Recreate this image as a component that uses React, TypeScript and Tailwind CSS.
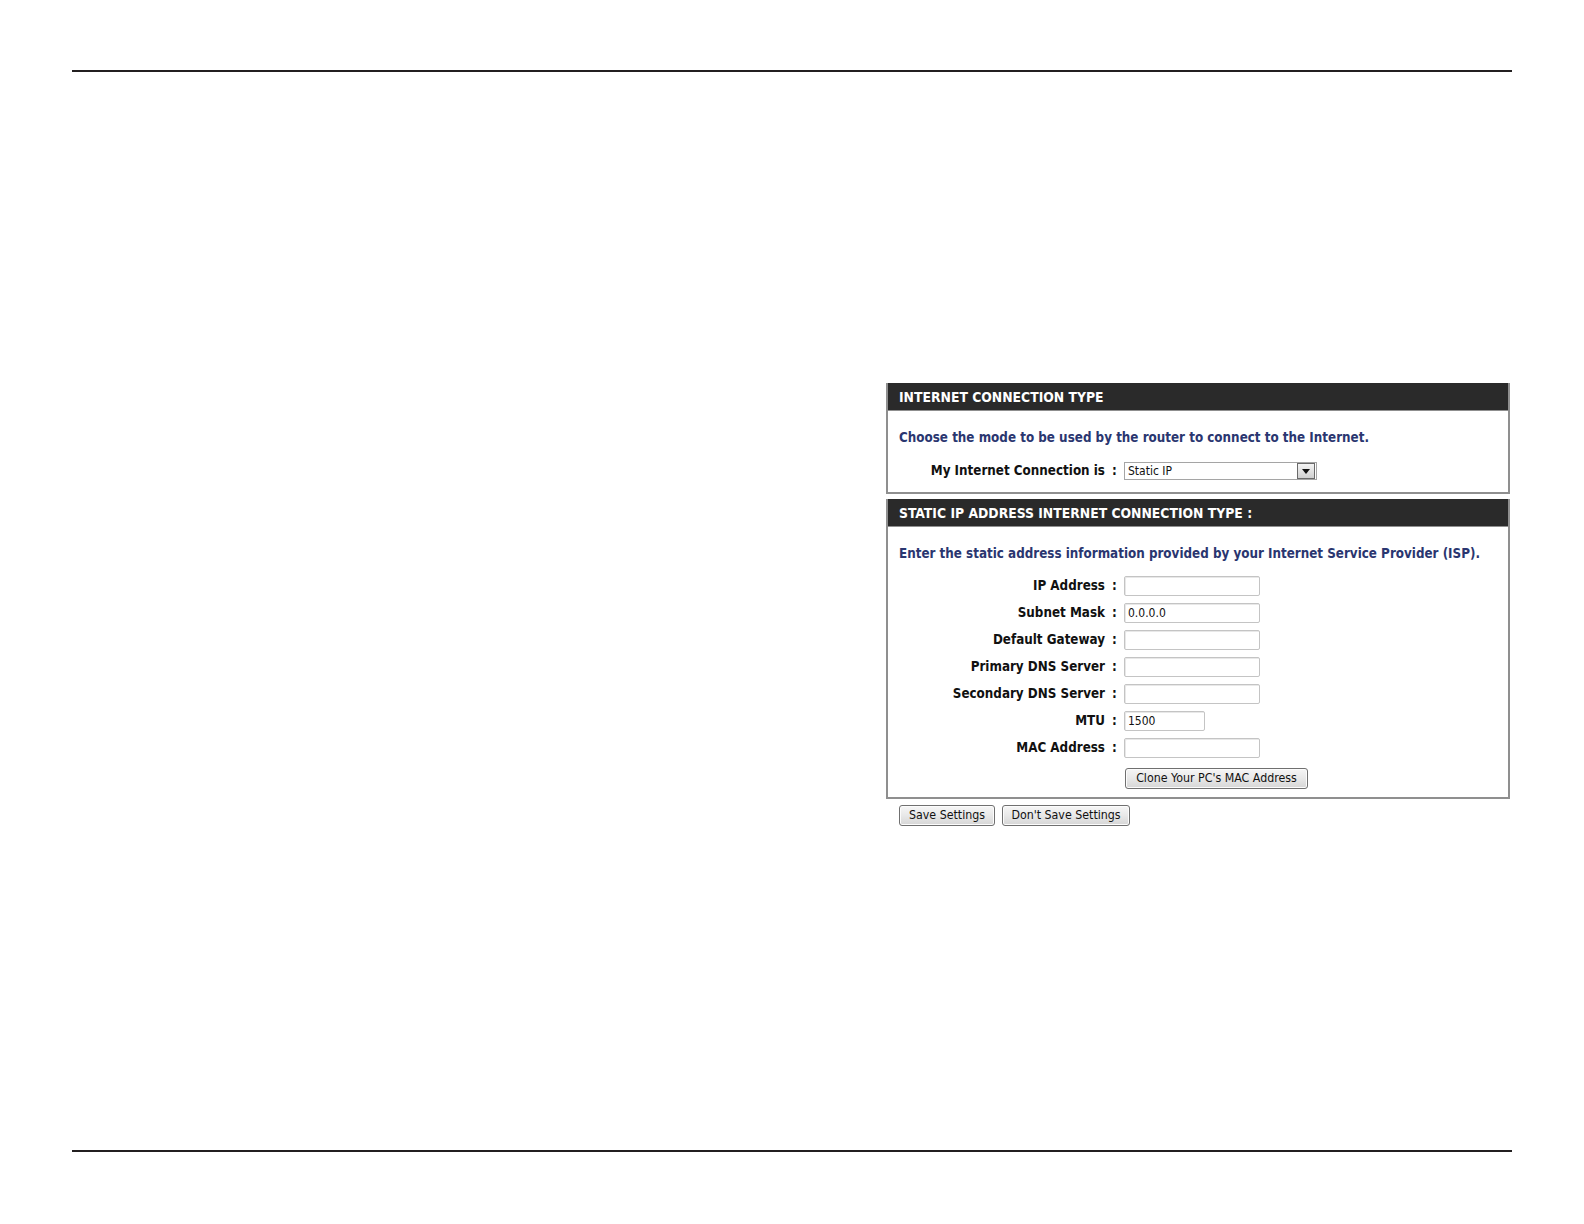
import React from "react";

const font = { fontFamily: '"DejaVu Sans Condensed", "DejaVu Sans", sans-serif' };

const rows = [
  { label: "IP Address", value: "", w: "w-[136px]" },
  { label: "Subnet Mask", value: "0.0.0.0", w: "w-[136px]" },
  { label: "Default Gateway", value: "", w: "w-[136px]" },
  { label: "Primary DNS Server", value: "", w: "w-[136px]" },
  { label: "Secondary DNS Server", value: "", w: "w-[136px]" },
  { label: "MTU", value: "1500", w: "w-[81px]" },
  { label: "MAC Address", value: "", w: "w-[136px]" },
];

function TextBox({ value, w }: { value: string; w: string }) {
  return (
    <div
      className={`${w} h-[20px] border border-[#c4c4c4] rounded-[2px] bg-white flex items-center pl-[3px] text-[12px] text-[#111] shadow-[inset_1px_1px_0_#e8e8e8]`}
    >
      {value}
    </div>
  );
}

function Btn({ children, w }: { children: React.ReactNode; w: string }) {
  return (
    <div
      className={`${w} h-[21px] border border-[#707070] rounded-[3px] bg-gradient-to-b from-[#f6f6f6] via-[#e8e8e8] to-[#d6d6d6] flex items-center justify-center text-[12.3px] text-[#111] shadow-[inset_0_0_0_1px_#fcfcfc]`}
    >
      {children}
    </div>
  );
}

function Header({ children }: { children: React.ReactNode }) {
  return (
    <div className="h-[28px] bg-[#2a2a2a] text-white font-bold text-[13.8px] pl-[11px] pt-[2px] flex items-center border-b border-[#8f8f8f]">
      {children}
    </div>
  );
}

function Label({ children }: { children: React.ReactNode }) {
  return (
    <>
      <div className="w-[217px] text-right font-bold text-[13.3px] text-[#111] whitespace-nowrap">{children}</div>
      <div className="w-[19px] text-center font-bold text-[13.3px] text-[#111]">:</div>
    </>
  );
}

export default function App() {
  return (
    <div className="w-[1584px] h-[1224px] bg-white flex flex-col px-[72px] pt-[70px] pb-[72px]" style={font}>
      <div className="h-[2px] bg-[#231f20]" />

      <div className="ml-[814px] w-[624px] mt-[311px]">
        {/* internet connection type */}
        <div className="border-2 border-t-0 border-[#8f8f8f]">
          <Header>INTERNET CONNECTION TYPE</Header>
          <div className="pt-[17px] pb-[11px]">
            <div className="pl-[11px] h-[20px] leading-[20px] font-bold text-[13.3px] text-[#2a3670] whitespace-nowrap">
              Choose the mode to be used by the router to connect to the Internet.
            </div>
            <div className="flex items-center h-[20px] mt-[13px]">
              <Label>My Internet Connection is</Label>
              <div className="w-[193px] h-[18px] border border-[#a5a5a5] bg-white flex items-center text-[12px] text-[#111]">
                <span className="flex-1 pl-[3px]">Static IP</span>
                <div className="w-[18px] h-[16px] border border-[#6a6a6a] bg-gradient-to-b from-[#f4f4f4] to-[#d0d0d0] flex items-center justify-center mr-px">
                  <svg width="8" height="5" viewBox="0 0 8 5">
                    <path d="M0 0 H8 L4 5 Z" fill="#111" />
                  </svg>
                </div>
              </div>
            </div>
          </div>
        </div>

        {/* static ip */}
        <div className="border-2 border-t-0 border-[#8f8f8f] mt-[5px]">
          <Header>STATIC IP ADDRESS INTERNET CONNECTION TYPE :</Header>
          <div className="pt-[17px] pb-[8px]">
            <div className="pl-[11px] h-[20px] leading-[20px] font-bold text-[13.3px] text-[#2a3670] whitespace-nowrap">
              Enter the static address information provided by your Internet Service Provider (ISP).
            </div>
            <div className="flex flex-col gap-[7px] mt-[12px]">
              {rows.map((r) => (
                <div key={r.label} className="flex items-center h-[20px]">
                  <Label>{r.label}</Label>
                  <TextBox value={r.value} w={r.w} />
                </div>
              ))}
              <div className="pl-[237px] pt-[3px]">
                <Btn w="w-[183px]">Clone Your PC's MAC Address</Btn>
              </div>
            </div>
          </div>
        </div>

        <div className="flex gap-[7px] pl-[13px] mt-[6px]">
          <Btn w="w-[96px]">Save Settings</Btn>
          <Btn w="w-[128px]">Don't Save Settings</Btn>
        </div>
      </div>

      <div className="mt-auto h-[2px] bg-[#231f20]" />
    </div>
  );
}
